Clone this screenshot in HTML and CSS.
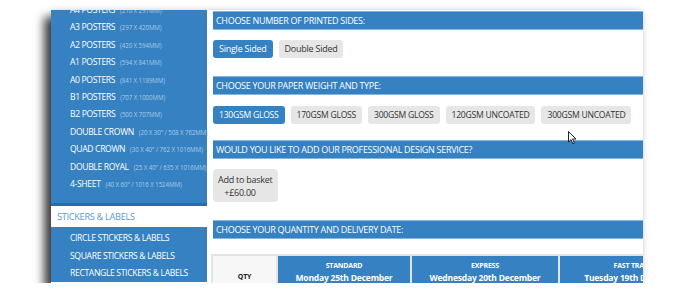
FILE: index.html
```html
<!DOCTYPE html>
<html>
	<head>
		<meta charset="utf-8">
		<title>Poster printing</title>
		<link rel="stylesheet" href="styles.css">
	</head>
	<body>
		<div class="shot">
			<!--左侧菜单-->
			<div class="side">
				<ul class="menu first">
					<li>A4 Posters <span>(210 x 297mm)</span></li>
					<li>A3 Posters <span>(297 x 420mm)</span></li>
					<li>A2 Posters <span>(420 x 594mm)</span></li>
					<li>A1 Posters <span>(594 x 841mm)</span></li>
					<li>A0 Posters <span>(841 x 1189mm)</span></li>
					<li>B1 Posters <span>(707 x 1000mm)</span></li>
					<li>B2 Posters <span>(500 x 707mm)</span></li>
					<li>Double Crown <span>(20 x 30" / 508 x 762mm)</span></li>
					<li>Quad Crown <span>(30 x 40" / 762 x 1016mm)</span></li>
					<li>Double Royal <span>(25 x 40" / 635 x 1016mm)</span></li>
					<li>4-Sheet <span>(40 x 60" / 1016 x 1524mm)</span></li>
				</ul>
				<div class="cat">Stickers &amp; Labels</div>
				<ul class="menu">
					<li>Circle Stickers &amp; Labels</li>
					<li>Square Stickers &amp; Labels</li>
					<li>Rectangle Stickers &amp; Labels</li>
				</ul>
			</div>

			<!--右侧选项-->
			<div class="main">
				<div class="bar">Choose number of printed sides:</div>
				<div class="opts">
					<a class="btn on" href="#">Single Sided</a>
					<a class="btn" href="#">Double Sided</a>
				</div>

				<div class="bar">Choose your paper weight and type:</div>
				<div class="opts caps">
					<a class="btn on" href="#">130gsm Gloss</a>
					<a class="btn" href="#">170gsm Gloss</a>
					<a class="btn" href="#">300gsm Gloss</a>
					<a class="btn" href="#">120gsm Uncoated</a>
					<a class="btn" href="#">300gsm Uncoated</a>
				</div>

				<div class="bar">Would you like to add our professional design service?</div>
				<div class="opts design">
					<a class="btn tall" href="#">Add to basket<br>&nbsp;&nbsp;&nbsp;+£60.00</a>
				</div>

				<div class="bar">Choose your quantity and delivery date:</div>
				<table class="prices">
					<tr>
						<th class="qty">QTY</th>
						<th class="w1"><small>STANDARD</small>Monday 25th December</th>
						<th class="w2"><small>EXPRESS</small>Wednesday 20th December</th>
						<th class="w3"><small>FAST TRACK</small>Tuesday 19th December</th>
					</tr>
				</table>
			</div>

			<svg class="cursor" width="9" height="14" viewBox="0 0 9 14">
				<path d="M0.5 0.5 L0.5 11 L3 8.6 L4.8 12.8 L6.3 12.1 L4.6 8 L8 8 Z" fill="#fff" stroke="#222" stroke-width="1"/>
			</svg>
		</div>
	</body>
</html>
```

FILE: styles.css
```css
* {
	margin: 0;
	padding: 0;
	box-sizing: border-box;
}

body {
	background-color: #FFFFFF;
	font-family: "Open Sans", "Noto Sans", sans-serif;
}

ul {
	list-style: none;
}

a {
	text-decoration: none;
}

.shot {
	position: relative;
	display: flex;
	width: 592px;
	height: 273px;
	margin: 10px 0 0 51px;
	overflow: hidden;
	background-color: #FFFFFF;
	box-shadow: -7px 7px 9px rgba(0, 0, 0, .75), 0 0 6px rgba(0, 0, 0, .12);
}

.side {
	width: 156px;
	flex-shrink: 0;
	background-color: #FFFFFF;
}

.menu {
	background-color: #3581C1;
	padding: 3px 0 0 19px;
}

.menu.first {
	margin-top: -8px;
	padding: 0 0 10px 19px;
	border-bottom: 3px solid #2A6CA6;
}

.menu li {
	height: 17.4px;
	line-height: 17.4px;
	font-size: 8.6px;
	color: #FFFFFF;
	text-transform: uppercase;
	white-space: nowrap;
	letter-spacing: -.35px;
}

.menu li span {
	margin-left: 3px;
	font-size: 6.2px;
	color: #A9CBEA;
	letter-spacing: -.1px;
}

.cat {
	height: 21px;
	line-height: 21px;
	padding-left: 6px;
	font-size: 9.2px;
	color: #5C9AD3;
	text-transform: uppercase;
	letter-spacing: -.3px;
}

.main {
	flex: 1;
	padding: 1px 0 0 6px;
	overflow: hidden;
}

.bar {
	width: 500px;
	height: 19px;
	line-height: 17px;
	padding-left: 3px;
	background-color: #3581C1;
	border-top: 1px solid #85B5E0;
	border-bottom: 1px solid #85B5E0;
	color: #FFFFFF;
	font-size: 9px;
	text-transform: uppercase;
	letter-spacing: -.3px;
	white-space: nowrap;
}

.opts {
	display: flex;
	gap: 6px;
	margin: 10px 0 18px;
}

.opts.caps {
	margin: 11px 0 16px;
}

.opts.design {
	margin: 10px 0 18px;
}

.btn {
	display: inline-block;
	height: 18px;
	line-height: 18px;
	padding: 0 6px;
	border-radius: 3px;
	background-color: #E6E6E6;
	color: #333333;
	font-size: 9px;
	letter-spacing: -.25px;
	white-space: nowrap;
}

.caps .btn {
	text-transform: uppercase;
	font-size: 8.6px;
}

.btn.on {
	background-color: #3581C1;
	color: #FFFFFF;
}

.btn.tall {
	height: 33px;
	line-height: 13px;
	padding: 4px 5px;
	border-radius: 4px;
}

.prices {
	width: 497px;
	margin: 15px 0 0 -2px;
	border-collapse: separate;
	border-spacing: 2px;
	background-color: #E4E4E4;
	table-layout: fixed;
}

.prices th {
	height: 40px;
	vertical-align: top;
	padding-top: 5px;
	background-color: #3581C1;
	color: #FFFFFF;
	font-size: 8.5px;
	font-weight: bold;
	letter-spacing: -.2px;
	white-space: nowrap;
	overflow: hidden;
}

.prices th small {
	display: block;
	font-size: 7px;
	line-height: 10px;
	margin-bottom: 1px;
}

.prices th.qty {
	width: 63px;
	padding-top: 16px;
	background-color: #F7F7F7;
	color: #222222;
	font-size: 7px;
}

.prices th.w1 {
	width: 132px;
}

.prices th.w2 {
	width: 146px;
}

.prices th.w3 {
	width: 146px;
}

.cursor {
	position: absolute;
	left: 517px;
	top: 121px;
}
```
